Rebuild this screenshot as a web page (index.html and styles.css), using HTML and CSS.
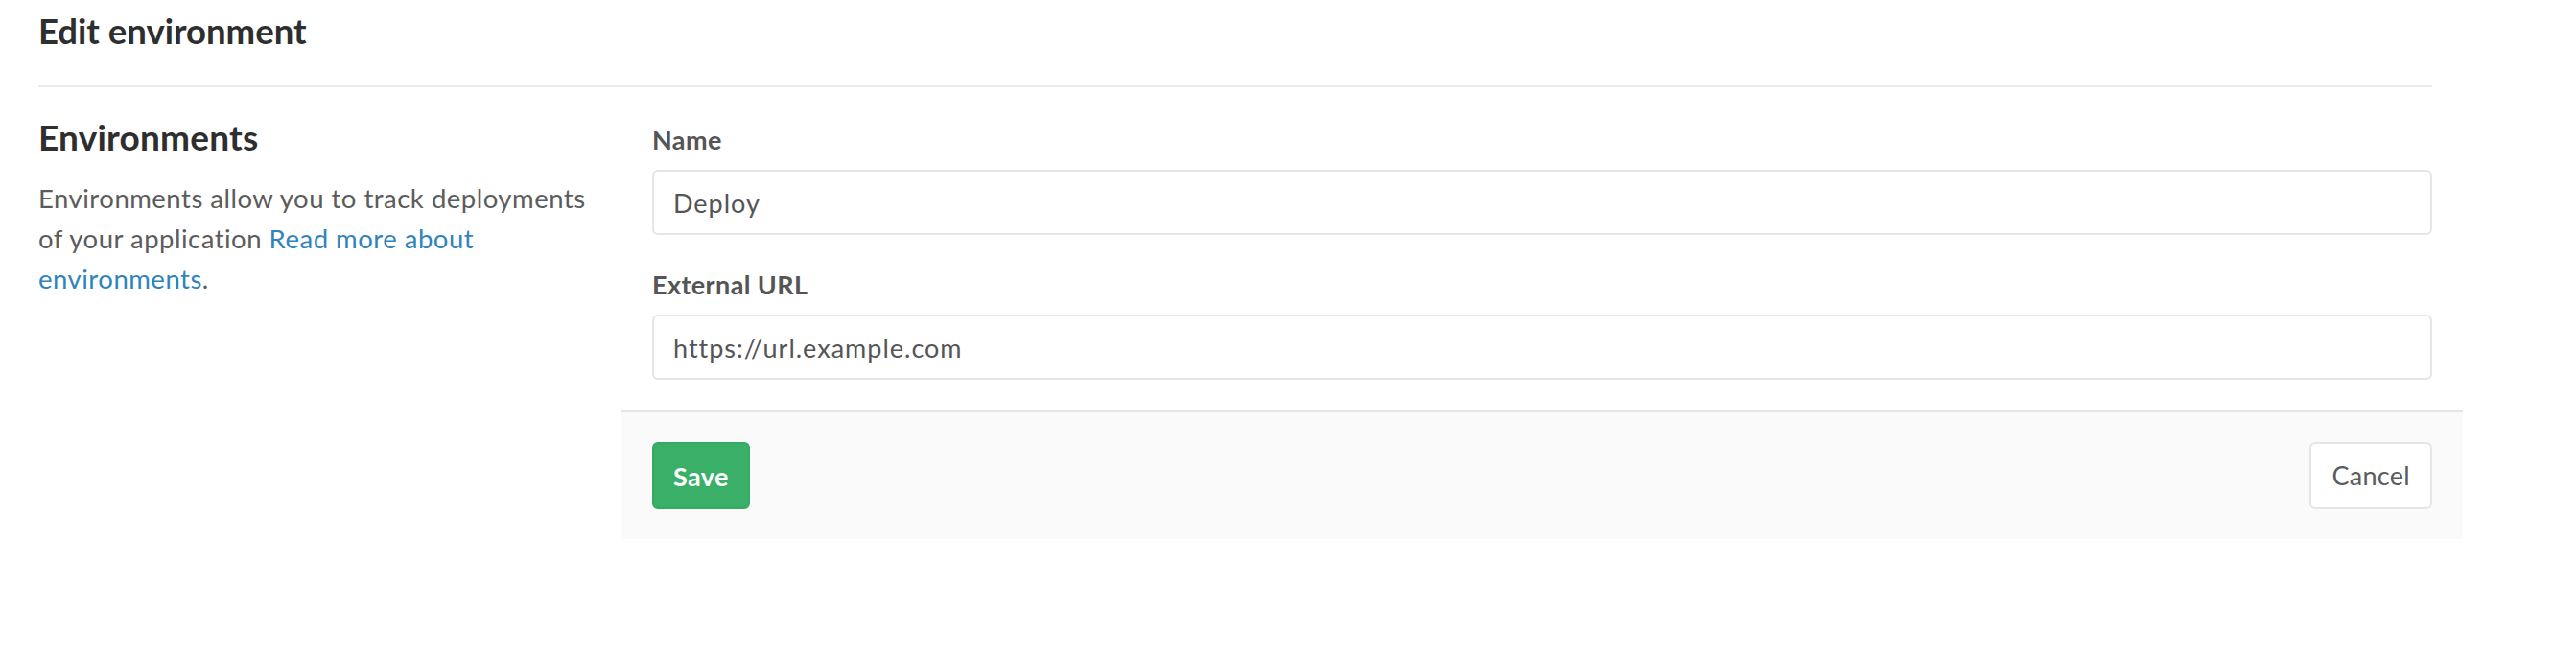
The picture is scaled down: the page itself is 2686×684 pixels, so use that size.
FILE: index.html
```html
<!DOCTYPE html>
<html lang="en">
<head>
<meta charset="utf-8">
<title>Edit environment</title>
<link rel="stylesheet" href="styles.css">
</head>
<body>
<div class="page">
  <h3 class="page-title">Edit environment</h3>
  <hr class="divider">
  <div class="row">
    <div class="intro">
      <h4 class="intro-title">Environments</h4>
      <p class="intro-text">Environments allow you to track deployments of your application <a href="#" class="link">Read more about environments</a>.</p>
    </div>
    <form class="env-form">
      <div class="form-group">
        <label class="label" for="env-name">Name</label>
        <input class="input" id="env-name" type="text" value="Deploy">
      </div>
      <div class="form-group">
        <label class="label" for="env-url">External URL</label>
        <input class="input" id="env-url" type="url" value="https://url.example.com">
      </div>
      <div class="form-actions">
        <button class="btn btn-save" type="button">Save</button>
        <a class="btn btn-cancel" href="#">Cancel</a>
      </div>
    </form>
  </div>
</div>
</body>
</html>
```

FILE: styles.css
```css
html, body {
  margin: 0;
  padding: 0;
  background: #ffffff;
}

body {
  font-family: Lato, "Open Sans", "Liberation Sans", sans-serif;
  font-size: 27px;
  line-height: 40px;
  letter-spacing: 0.15px;
  color: #5c5c5c;
}

.page {
  width: 2496px;
  margin-left: 40px;
}

.page-title {
  margin: 8px 0 0;
  font-size: 36.5px;
  line-height: 48px;
  font-weight: 700;
  letter-spacing: 0;
  color: #2e2e2e;
}

.divider {
  margin: 33px 0 0;
  border: 0;
  height: 2px;
  background: #ebebeb;
}

.row {
  display: grid;
  grid-template-columns: 579px 1fr;
  column-gap: 61px;
  margin-top: 35px;
}

.intro-title {
  margin: -1px 0 0;
  font-size: 37px;
  line-height: 36px;
  font-weight: 700;
  letter-spacing: 0.2px;
  color: #2e2e2e;
}

.intro-text {
  margin: 25px 0 0;
  font-size: 27.5px;
  line-height: 42px;
  letter-spacing: 0.5px;
}

.link {
  color: #3084bb;
  text-decoration: none;
}

.form-group {
  display: flex;
  flex-direction: column;
  margin-bottom: 32px;
}

.label {
  font-weight: 700;
  color: #555555;
  line-height: 40px;
  letter-spacing: 0.4px;
  margin-bottom: 11px;
}

.input {
  box-sizing: border-box;
  height: 68px;
  width: 100%;
  border: 2px solid #e5e5e5;
  border-radius: 6px;
  padding: 0 20px;
  font-family: inherit;
  font-size: 27px;
  letter-spacing: 1px;
  color: #555555;
  background: #ffffff;
  outline: none;
}

.form-actions {
  display: flex;
  justify-content: space-between;
  align-items: center;
  margin: 0 -32px;
  padding: 31px 32px;
  border-top: 2px solid #e5e5e5;
  background: #fafafa;
}

.btn {
  box-sizing: border-box;
  display: inline-flex;
  align-items: center;
  justify-content: center;
  height: 70px;
  padding: 0 21px;
  border: 2px solid transparent;
  border-radius: 6px;
  font-family: inherit;
  font-size: 27px;
  text-decoration: none;
  cursor: pointer;
}

.btn-save {
  background: #39af67;
  border-color: #35a861;
  color: #ffffff;
  font-weight: 700;
  letter-spacing: 0.4px;
  padding: 0 20px;
}

.btn-cancel {
  background: #ffffff;
  border-color: #e5e5e5;
  color: #5c5c5c;
  letter-spacing: 0.3px;
}
```
